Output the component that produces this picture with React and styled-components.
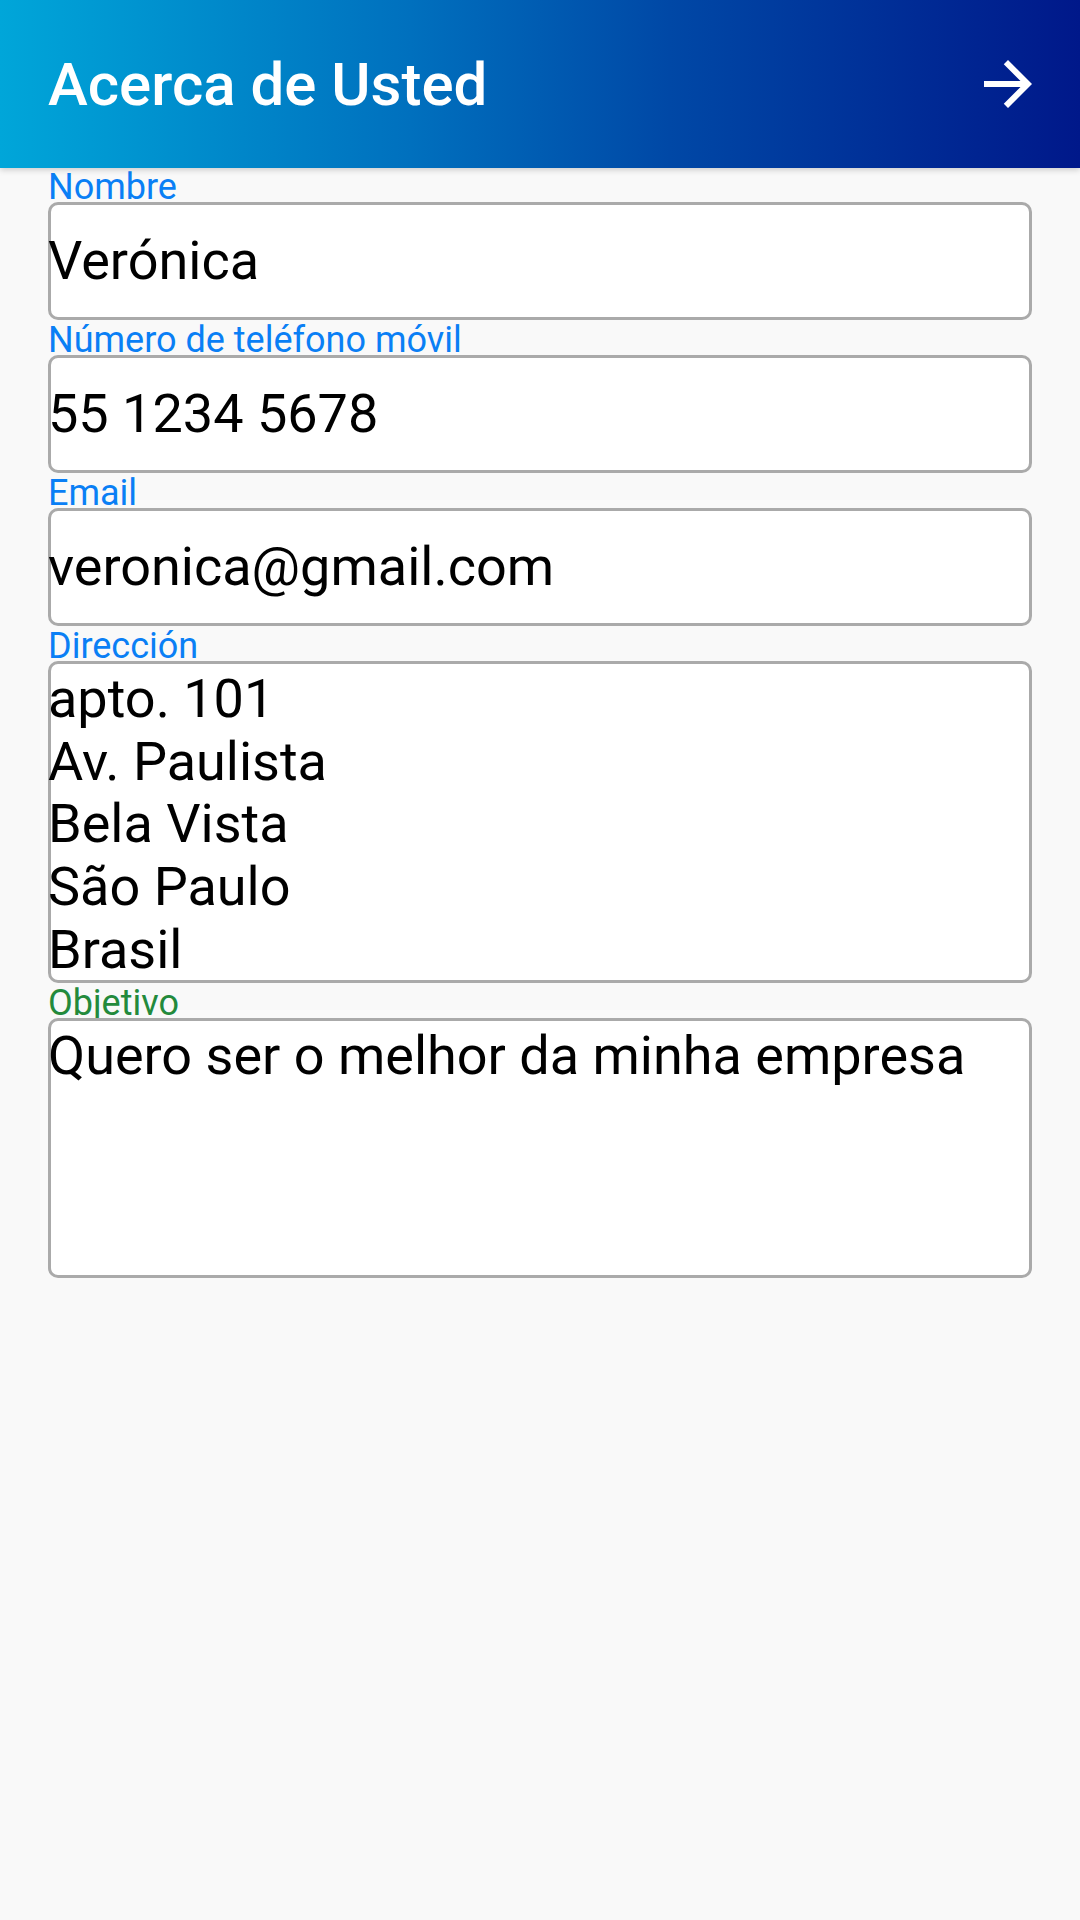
import styled, { createGlobalStyle } from 'styled-components';

const GlobalStyle = createGlobalStyle`
  html, body {
    margin: 0;
    padding: 0;
    background: #f9f9f9;
  }
  body {
    font-family: Roboto, "Noto Sans", sans-serif;
    color: #000;
  }
`;

const Screen = styled.div`
  display: flex;
  flex-direction: column;
  min-height: 1920px;
  background: #f9f9f9;
`;

const AppBar = styled.header`
  align-items: center;
  background: linear-gradient(to right, #00a6d9 0%, #0070be 38%, #0048a6 62%, #00188a 100%);
  box-shadow: 0 2px 6px rgba(0, 0, 0, 0.18);
  box-sizing: border-box;
  display: flex;
  height: 168px;
  justify-content: space-between;
  padding: 0 36px 0 48px;
  position: relative;
  z-index: 1;
`;

const Title = styled.h1`
  color: #fff;
  font-size: 60px;
  font-weight: 500;
  margin: 0;
`;

const NextButton = styled.button`
  background: none;
  border: 0;
  cursor: pointer;
  display: flex;
  padding: 0;
  & svg {
    display: block;
    fill: #fff;
    height: 72px;
    width: 72px;
  }
`;

const Form = styled.form`
  display: flex;
  flex-direction: column;
  gap: 5px;
  padding: 4px 48px 0;
`;

const Field = styled.div`
  display: flex;
  flex-direction: column;
`;

const Label = styled.label`
  color: ${p => (p.$accent === 'green' ? '#238a3c' : '#0a7ff5')};
  font-size: 36px;
  line-height: 30px;
  height: 30px;
  white-space: nowrap;
`;

const Box = styled.div`
  background: #fff;
  border: 3px solid #aaa;
  border-radius: 10px;
  box-sizing: border-box;
  display: flex;
  flex-direction: column;
  font-size: 54px;
  height: ${p => p.$height}px;
  justify-content: ${p => (p.$multiline ? 'flex-start' : 'center')};
  line-height: 62.7px;
  padding: ${p => (p.$multiline ? '4px 0 0' : '0')};
`;

const Value = styled.div`
  margin-left: -3px;
  white-space: pre-line;
`;

const fields = [
  { label: 'Nombre', value: 'Verónica', height: 118 },
  { label: 'Número de teléfono móvil', value: '55 1234 5678', height: 118 },
  { label: 'Email', value: 'veronica@gmail.com', height: 118 },
  {
    label: 'Dirección',
    value: 'apto. 101\nAv. Paulista\nBela Vista\nSão Paulo\nBrasil',
    height: 322,
    multiline: true,
  },
  {
    label: 'Objetivo',
    value: 'Quero ser o melhor da minha empresa',
    height: 260,
    multiline: true,
    accent: 'green',
  },
];

const App = () => (
  <>
    <GlobalStyle />
    <Screen>
      <AppBar>
        <Title>Acerca de Usted</Title>
        <NextButton type="button" aria-label="Siguiente">
          <svg viewBox="0 0 24 24">
            <path d="M12 4l-1.41 1.41L16.17 11H4v2h12.17l-5.58 5.59L12 20l8-8z" />
          </svg>
        </NextButton>
      </AppBar>
      <Form>
        {fields.map(f => (
          <Field key={f.label}>
            <Label $accent={f.accent}>{f.label}</Label>
            <Box $height={f.height} $multiline={f.multiline}>
              <Value>{f.value}</Value>
            </Box>
          </Field>
        ))}
      </Form>
    </Screen>
  </>
);

export default App;
